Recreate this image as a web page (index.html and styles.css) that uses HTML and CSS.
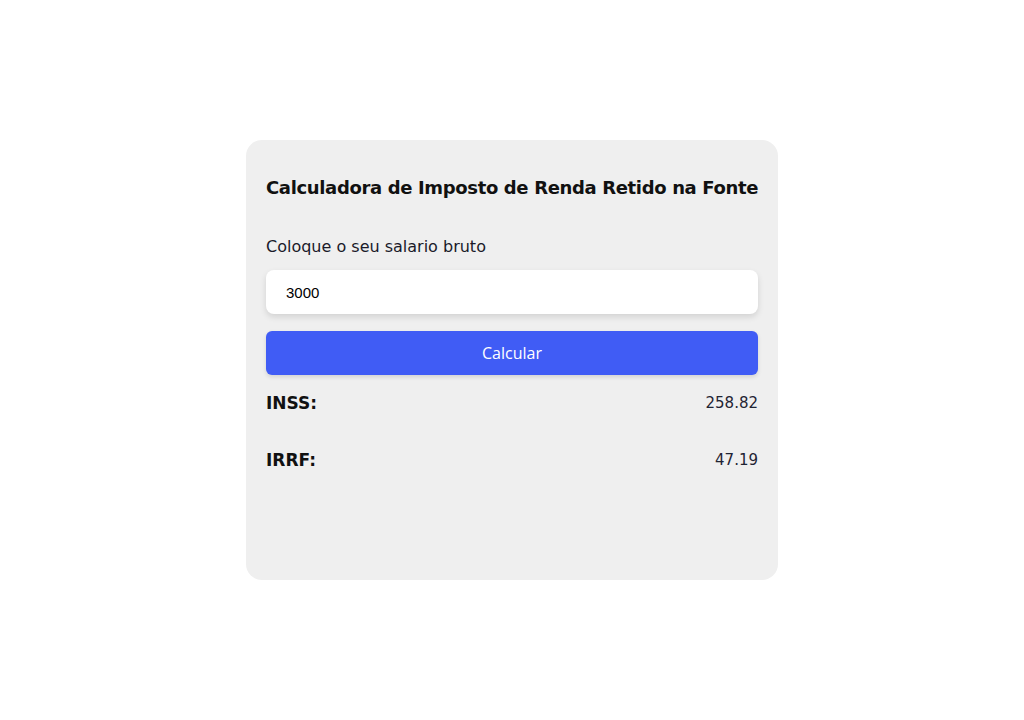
FILE: index.html
```html
<!DOCTYPE html>
<html lang="pt-BR">
<head>
<meta charset="utf-8">
<title>Calculadora IRRF</title>
<link rel="stylesheet" href="styles.css">
</head>
<body>
<main class="page">
  <section class="card">
    <h1 class="title">Calculadora de Imposto de Renda Retido na Fonte</h1>
    <label class="label" for="salario">Coloque o seu salario bruto</label>
    <input class="input" id="salario" type="text" value="3000">
    <button class="button" type="button">Calcular</button>
    <div class="row">
      <span class="row-key">INSS:</span>
      <span class="row-value">258.82</span>
    </div>
    <div class="row">
      <span class="row-key">IRRF:</span>
      <span class="row-value">47.19</span>
    </div>
  </section>
</main>
</body>
</html>
```
FILE: styles.css
```css
* { box-sizing: border-box; }
html, body { margin: 0; padding: 0; background: #fff; }
body { font-family: "DejaVu Sans", "Noto Sans", sans-serif; color: #111; }
.page {
  min-height: 100vh;
  display: flex;
  align-items: center;
  justify-content: center;
}
.card {
  width: 532px;
  height: 440px;
  background: #efefef;
  border-radius: 16px;
  padding: 20px;
  display: flex;
  flex-direction: column;
}
.title {
  margin: 14px 0 0;
  font-size: 18px;
  line-height: 27px;
  font-weight: 700;
  color: #111;
  letter-spacing: -0.35px;
  white-space: nowrap;
}
.label {
  margin-top: 34px;
  font-size: 16px;
  line-height: 24px;
  color: #1a1a2a;
  font-weight: 400;
}
.input {
  margin-top: 11px;
  height: 44px;
  width: 100%;
  border: none;
  border-radius: 8px;
  background: #fff;
  padding: 0 20px;
  font-family: "Liberation Sans", Arial, sans-serif;
  font-size: 15px;
  color: #000;
  box-shadow: 0 3px 6px rgba(0,0,0,0.12);
  outline: none;
}
.button {
  margin-top: 17px;
  height: 44px;
  width: 100%;
  border: none;
  border-radius: 6px;
  background: #405cf5;
  color: #fff;
  font-family: "Open Sans", sans-serif;
  font-size: 16px;
  box-shadow: 0 2px 4px rgba(0,0,0,0.12);
}
.row {
  display: flex;
  justify-content: space-between;
  align-items: center;
  height: 27px;
  margin-top: 14px;
}
.row + .row { margin-top: 30px; }
.row-key {
  font-size: 17px;
  font-weight: 700;
  color: #111;
}
.row-value {
  font-size: 15px;
  color: #1f2433;
}
```
